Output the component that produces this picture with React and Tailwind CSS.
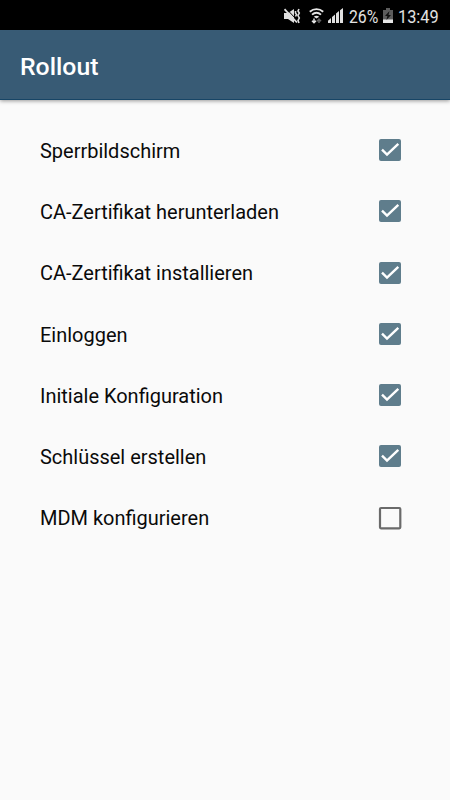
import { useState } from 'react';

const initialSteps = [
    { label: 'Sperrbildschirm', done: true },
    { label: 'CA-Zertifikat herunterladen', done: true },
    { label: 'CA-Zertifikat installieren', done: true },
    { label: 'Einloggen', done: true },
    { label: 'Initiale Konfiguration', done: true },
    { label: 'Schlüssel erstellen', done: true },
    { label: 'MDM konfigurieren', done: false },
];

const MuteIcon = () => (
    <svg width="17" height="16" viewBox="0 0 17 16" fill="none">
        <path d="M0 5h4l6-4v14l-6-4H0z" fill="#e0e0e0" />
        <path d="M3 1.5l10 10.5" stroke="#000" strokeWidth="1" />
        <path d="M0.5 1.2l12.5 13.3" stroke="#e0e0e0" strokeWidth="1.8" />
        <path d="M11.5 3v2l1 1.5-1 2M15 1l-1 2 1.3 2-1.3 2.5 1.3 2.5-1.3 2.5 1 2.5" stroke="#e0e0e0" strokeWidth="1.6" />
    </svg>
);

const WifiIcon = () => (
    <svg width="15" height="16" viewBox="0 0 15 16" fill="none">
        <path d="M0.8 3.8c4-3.6 9.4-3.6 13.4 0M3 6.6c2.8-2.4 6.2-2.4 9 0" stroke="#e6e6e6" strokeWidth="1.9" />
        <path d="M4.8 8.8c1.6-1.5 3.8-1.5 5.4 0L7.5 10.4z" fill="#e6e6e6" />
        <path d="M5 10.5v4M3 12.7l2 2 2-2" stroke="#e6e6e6" strokeWidth="1.5" />
        <path d="M10 15v-4M8 13.2l2-2 2 2" stroke="#606060" strokeWidth="1.6" />
    </svg>
);

const SignalIcon = () => (
    <svg width="15" height="15" viewBox="0 0 15 15" fill="#e0e0e0">
        <path d="M0 15v-2.2L3 10v5zM4 15V9L7 6.5V15zM8 15V5.5l3-2.6V15zM12 15V2.2L15 0v15z" />
    </svg>
);

const BatteryIcon = () => (
    <svg width="10" height="15" viewBox="0 0 10 15">
        <path d="M3 0h4v2h3v13H0V2h3z" fill="#5c5c5c" />
        <path d="M0 11.5h10V15H0z" fill="#e8e8e8" />
        <path d="M6.5 3L2 8h2.4l-1 4L8 7H5.5z" fill="#111" />
    </svg>
);

const StatusBar = () => (
    <div className="flex h-[30px] items-center bg-black pl-[284px] pt-px text-[#e2e2e2]">
        <MuteIcon />
        <div className="ml-2"><WifiIcon /></div>
        <div className="ml-1"><SignalIcon /></div>
        <div className="ml-[6px] w-[30px] origin-left scale-x-[0.83] whitespace-nowrap pt-[3px] text-[19px] leading-6">26%</div>
        <div className="ml-1"><BatteryIcon /></div>
        <div className="ml-[5px] w-[40px] origin-left scale-x-[0.86] whitespace-nowrap pt-[3px] text-[19px] leading-6">13:49</div>
    </div>
);

const Checkbox = ({ checked }) => (
    <svg width="24" height="24" viewBox="0 0 24 24" fill="none">
        {checked ? (
            <>
                <rect x="1" y="1" width="22" height="22" rx="2" fill="#5f7d8c" />
                <path d="M4 11.6l5 5L20.3 5.8" stroke="#fff" strokeWidth="2.4" />
            </>
        ) : (
            <rect x="2" y="2" width="20.3" height="20.3" rx="1" stroke="#6a6a6a" strokeWidth="2.2" />
        )}
    </svg>
);

export default function App() {
    const [steps, setSteps] = useState(initialSteps);

    const toggle = (index) => {
        setSteps(steps.map((step, i) => (i === index ? { ...step, done: !step.done } : step)));
    };

    return (
        <div className="flex h-[800px] w-[450px] flex-col overflow-hidden bg-[#fafafa] font-['Roboto',sans-serif]">
            <StatusBar />
            <header className="flex h-[70px] items-center border-b border-[#174566] bg-[#385b75] px-5 pt-[5px] shadow-[0_1px_4px_rgba(0,0,0,0.4)]">
                <h1 className="text-[24.8px] font-medium leading-8 text-white">Rollout</h1>
            </header>
            <main className="flex flex-col pl-10 pr-12 pt-[19.5px]">
                {steps.map((step, index) => (
                    <button
                        key={step.label}
                        role="checkbox"
                        aria-checked={step.done}
                        onClick={() => toggle(index)}
                        className="flex h-[61.25px] items-center justify-between text-left text-[19.98px] text-[#0a0a0a]"
                    >
                        <span className="pt-[3.4px]">{step.label}</span>
                        <Checkbox checked={step.done} />
                    </button>
                ))}
            </main>
        </div>
    );
}
